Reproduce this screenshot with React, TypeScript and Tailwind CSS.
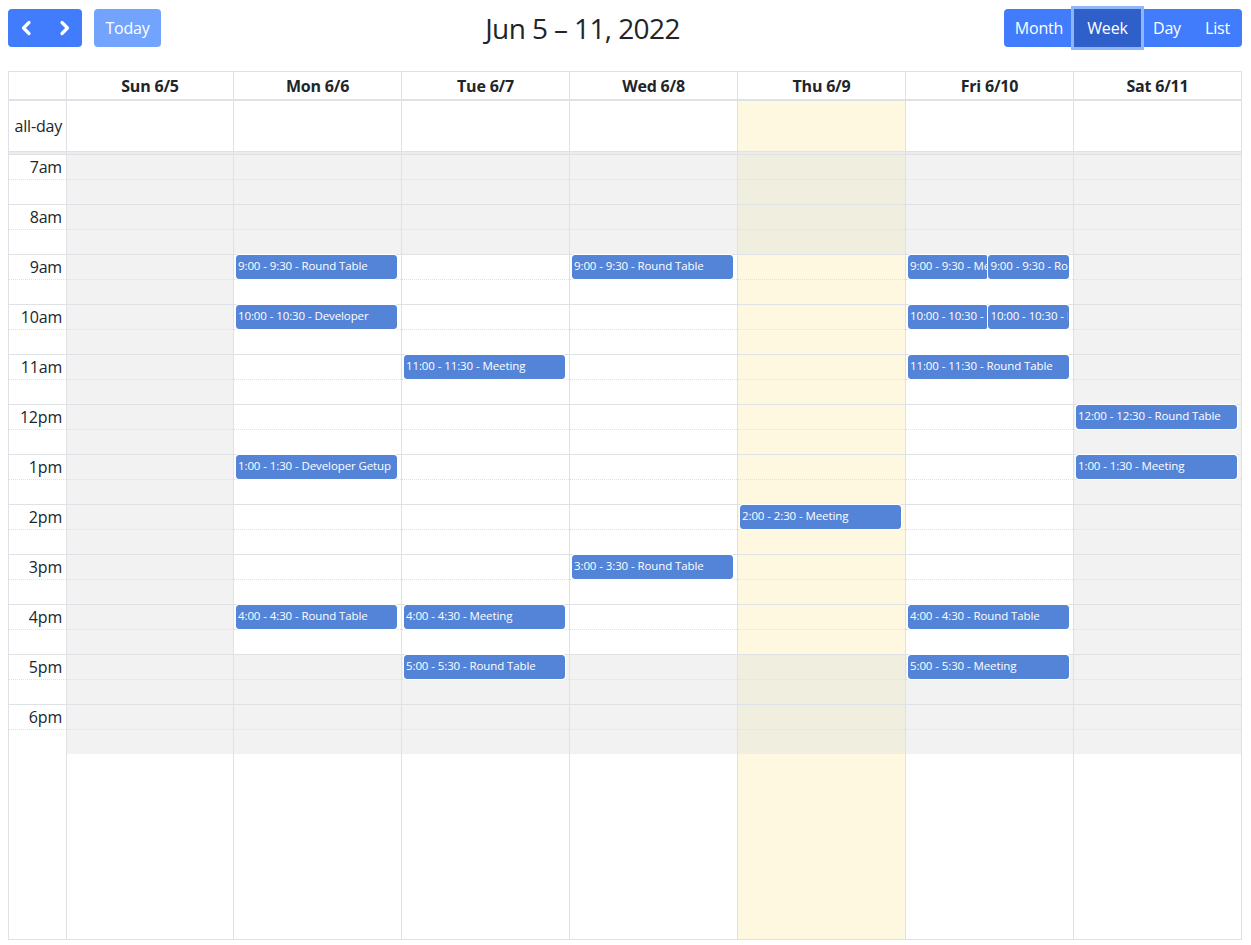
import React from 'react'

type Ev = { start: number; title: string; end: string; startLabel: string; col?: 0 | 1 | 2 }

const font = { fontFamily: '"Open Sans", "Noto Sans", sans-serif' }

const hours = ['7am', '8am', '9am', '10am', '11am', '12pm', '1pm', '2pm', '3pm', '4pm', '5pm', '6pm']

function ev(start: number, startLabel: string, end: string, title: string, col: 0 | 1 | 2 = 0): Ev {
  return { start, startLabel, end, title, col }
}

const days: { label: string; work: boolean; today?: boolean; events: Ev[] }[] = [
  { label: 'Sun 6/5', work: false, events: [] },
  {
    label: 'Mon 6/6',
    work: true,
    events: [
      ev(9, '9:00', '9:30', 'Round Table'),
      ev(10, '10:00', '10:30', 'Developer'),
      ev(13, '1:00', '1:30', 'Developer Getup'),
      ev(16, '4:00', '4:30', 'Round Table'),
    ],
  },
  {
    label: 'Tue 6/7',
    work: true,
    events: [ev(11, '11:00', '11:30', 'Meeting'), ev(16, '4:00', '4:30', 'Meeting'), ev(17, '5:00', '5:30', 'Round Table')],
  },
  { label: 'Wed 6/8', work: true, events: [ev(9, '9:00', '9:30', 'Round Table'), ev(15, '3:00', '3:30', 'Round Table')] },
  { label: 'Thu 6/9', work: true, today: true, events: [ev(14, '2:00', '2:30', 'Meeting')] },
  {
    label: 'Fri 6/10',
    work: true,
    events: [
      ev(9, '9:00', '9:30', 'Meeting', 1),
      ev(9, '9:00', '9:30', 'Round Table', 2),
      ev(10, '10:00', '10:30', 'Developer', 1),
      ev(10, '10:00', '10:30', 'Meeting', 2),
      ev(11, '11:00', '11:30', 'Round Table'),
      ev(16, '4:00', '4:30', 'Round Table'),
      ev(17, '5:00', '5:30', 'Meeting'),
    ],
  },
  { label: 'Sat 6/11', work: false, events: [ev(12, '12:00', '12:30', 'Round Table'), ev(13, '1:00', '1:30', 'Meeting')] },
]

function Chevron({ dir }: { dir: 'l' | 'r' }) {
  return (
    <svg width="14" height="16" viewBox="0 0 14 16" fill="none">
      <polyline
        points={dir === 'l' ? '9,2.5 3.5,8 9,13.5' : '5,2.5 10.5,8 5,13.5'}
        stroke="white"
        strokeWidth="3.2"
        strokeLinecap="round"
        strokeLinejoin="round"
      />
    </svg>
  )
}

function DayColumn({ day }: { day: (typeof days)[number] }) {
  const slotBg = (i: number) => {
    const business = day.work && i >= 4 && i < 20
    if (business) return ''
    return day.today ? 'bg-[#f0efdf]' : 'bg-[#f2f2f2]'
  }

  return (
    <div className="flex flex-col border-l border-[#dee2e6]">
      <div className="h-[28px] flex items-center justify-center font-bold text-[16px] tracking-[-0.2px] text-[#212529] border-b border-[#dee2e6] bg-white">
        {day.label}
      </div>
      <div className={`flex-1 flex flex-col ${day.today ? 'bg-[#fdf8df]' : 'bg-white'}`}>
        <div className="h-[51px] border-t border-[#dee2e6]"></div>
        <div className="h-[3px] border-t border-[#dee2e6] bg-[#ececec]"></div>
        <div className="relative">
          {Array.from({ length: 24 }).map((_, i) => (
            <div
              key={i}
              className={`h-[25px] border-t border-[#dee2e6] ${i % 2 ? 'border-dotted' : ''} ${slotBg(i)}`}
            ></div>
          ))}
          <div className="absolute inset-y-0 left-[2px] right-[2.5%]">
            {day.events.map((e, k) => {
              const top = (e.start - 7) * 50 + 1
              const pos = e.col === 1 ? 'left-0 w-1/2' : e.col === 2 ? 'left-1/2 right-0' : 'left-0 right-0'
              return (
                <div
                  key={k}
                  style={{ top }}
                  className={`absolute ${pos} h-[24px] rounded-[3px] border border-[#5484d8] bg-[#5484d8] ring-1 ring-white text-white text-[11.5px] tracking-[-0.1px] leading-[16px] px-px pt-[2px] overflow-hidden whitespace-nowrap`}
                >
                  {e.startLabel} - {e.end} - {e.title}
                </div>
              )
            })}
          </div>
        </div>
        <div className="flex-1"></div>
      </div>
    </div>
  )
}

export default function App() {
  return (
    <div className="h-[945px] overflow-hidden bg-white text-[#212529]" style={font}>
      <div className="ml-2 w-[1234px] pt-[9px] flex flex-col h-[940px]">
        <div className="flex items-center justify-between h-[38px] mb-[24px]">
          <div className="flex">
            <div className="flex rounded-[4px] overflow-hidden bg-[#417cfd]">
              <button className="w-[37px] h-[38px] flex items-center justify-center">
                <Chevron dir="l" />
              </button>
              <button className="w-[37px] h-[38px] flex items-center justify-center">
                <Chevron dir="r" />
              </button>
            </div>
            <button className="ml-3 w-[67px] h-[38px] rounded-[4px] bg-[#72a4fe] text-white text-[16px] tracking-[-0.2px]">Today</button>
          </div>
          <h2 className="text-[28px] leading-[38px] tracking-[-0.6px] text-[#212529]">Jun 5 – 11, 2022</h2>
          <div className="flex rounded-[4px] bg-[#417cfd] text-white text-[16px] tracking-[-0.2px]">
            <button className="w-[70px] h-[38px]">Month</button>
            <button className="w-[67px] h-[38px] bg-[#2f5fc9] ring-[3px] ring-[#8fb6fb] z-10">Week</button>
            <button className="w-[52px] h-[38px]">Day</button>
            <button className="w-[49px] h-[38px]">List</button>
          </div>
        </div>

        <div className="flex-1 grid grid-cols-[57px_167px_repeat(6,168px)] border border-[#dee2e6]">
          <div className="flex flex-col text-[16px] tracking-[-0.2px] text-[#212529]">
            <div className="h-[28px] border-b border-[#dee2e6]"></div>
            <div className="h-[51px] border-t border-[#dee2e6] flex items-center justify-end pr-1">all-day</div>
            <div className="h-[3px] border-t border-[#dee2e6] bg-[#ececec]"></div>
            {Array.from({ length: 24 }).map((_, i) => (
              <div
                key={i}
                className={`h-[25px] border-t border-[#dee2e6] ${i % 2 ? 'border-dotted' : ''} text-right pr-1 leading-[24px]`}
              >
                {i % 2 === 0 ? hours[i / 2] : ''}
              </div>
            ))}
            <div className="flex-1"></div>
          </div>
          {days.map((d) => (
            <DayColumn key={d.label} day={d} />
          ))}
        </div>
      </div>
    </div>
  )
}
